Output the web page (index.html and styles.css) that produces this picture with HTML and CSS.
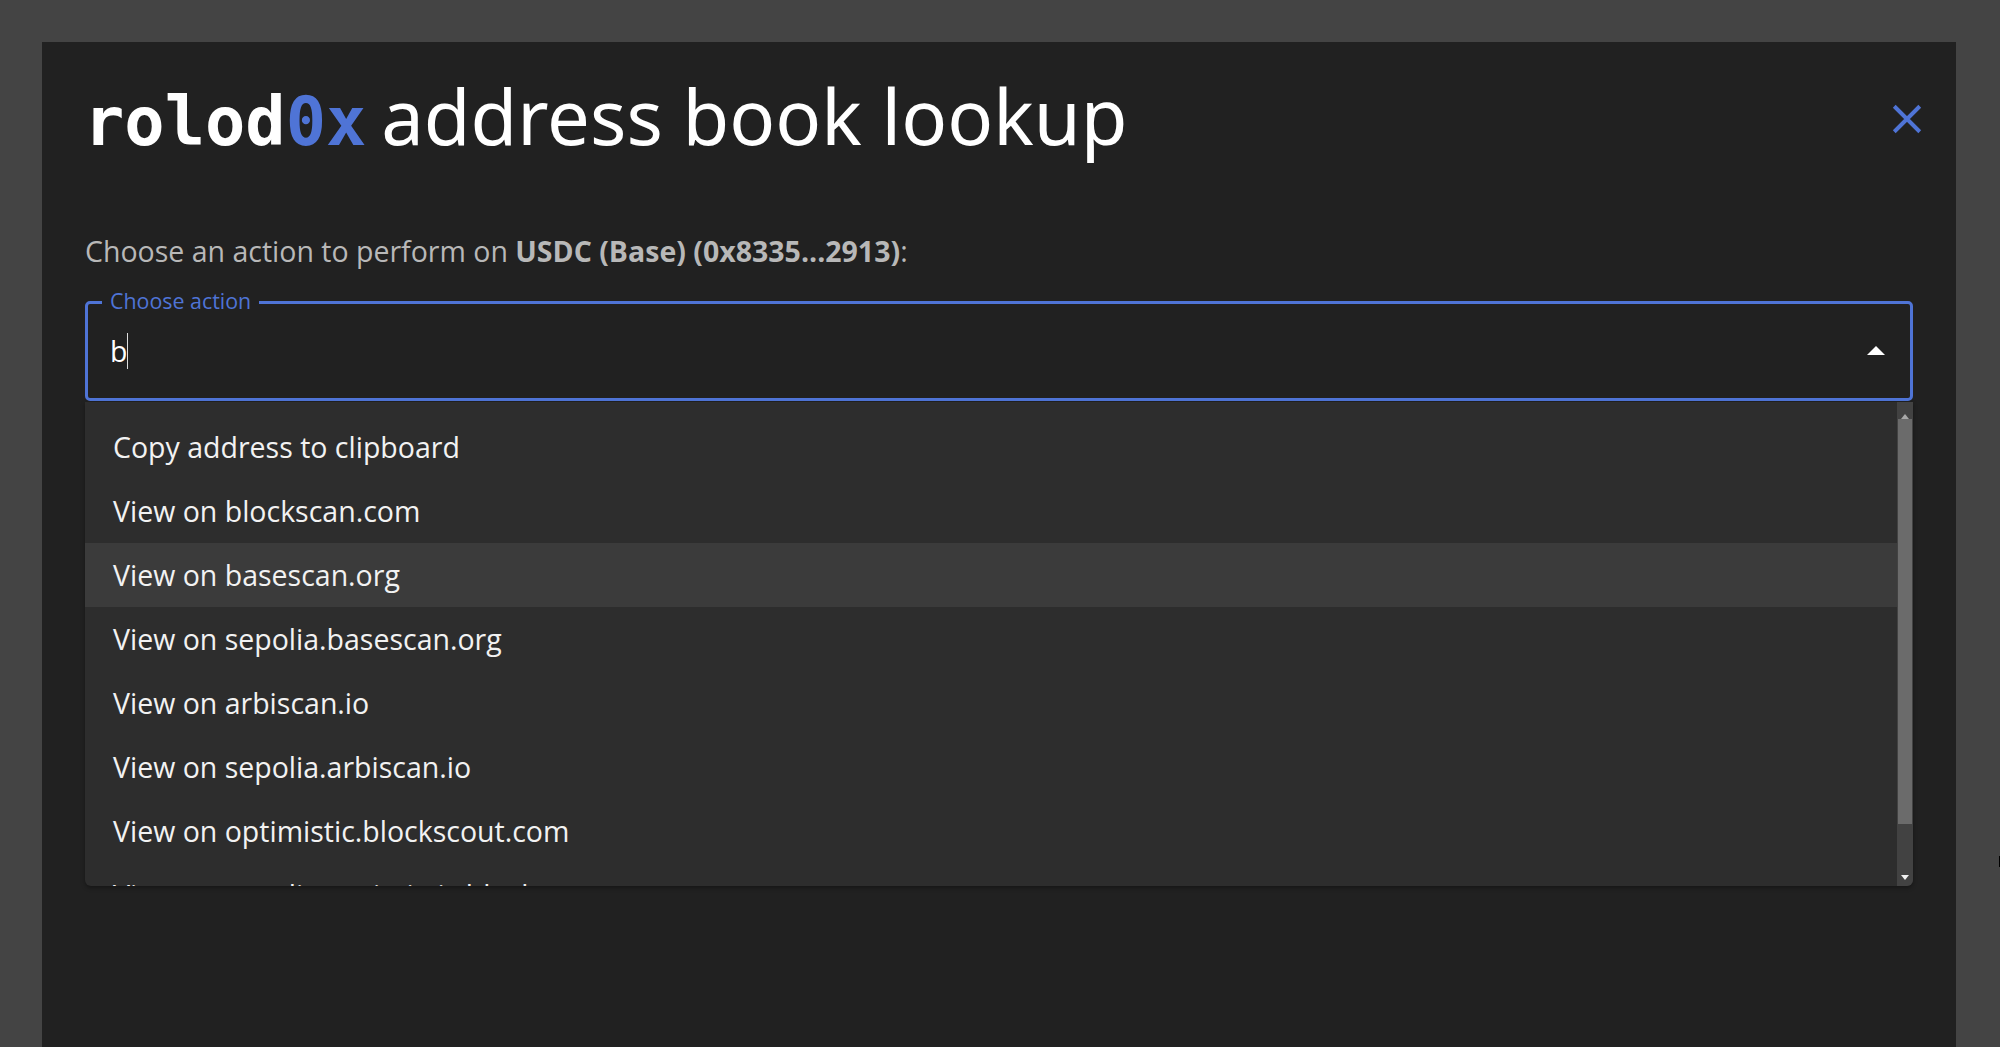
FILE: index.html
```html
<!DOCTYPE html>
<html lang="en">
<head>
<meta charset="utf-8">
<title>rolod0x address book lookup</title>
<link rel="stylesheet" href="styles.css">
</head>
<body>
<main class="modal">
  <header class="head">
    <h1 class="title"><span class="brand">rolod<span class="accent">0x</span></span> address book lookup</h1>
    <button class="close" aria-label="Close">
      <svg viewBox="0 0 24 24" width="36" height="36"><path d="M3.5 3.5 20.5 20.5M20.5 3.5 3.5 20.5" fill="none" stroke="#4f74d6" stroke-width="2.6"/></svg>
    </button>
  </header>
  <p class="prompt">Choose an action to perform on <b>USDC (Base) (0x8335...2913)</b>:</p>
  <div class="combo">
    <div class="field">
      <span class="label">Choose action</span>
      <span class="value">b</span><span class="caret"></span>
      <svg class="arrow" viewBox="0 0 18 9" width="18" height="9"><path d="M0 9 9 0 18 9Z" fill="#fff"/></svg>
    </div>
    <div class="menu">
      <ul class="list">
        <li>Copy address to clipboard</li>
        <li>View on blockscan.com</li>
        <li class="hover">View on basescan.org</li>
        <li>View on sepolia.basescan.org</li>
        <li>View on arbiscan.io</li>
        <li>View on sepolia.arbiscan.io</li>
        <li>View on optimistic.blockscout.com</li>
        <li>View on sepolia-optimistic.blockscout.com</li>
      </ul>
      <div class="scrollbar">
        <span class="tri up"></span>
        <span class="thumb"></span>
        <span class="tri down"></span>
      </div>
    </div>
  </div>
</main>
<span class="cursor"></span>
</body>
</html>
```

FILE: styles.css
```css
html { overflow: hidden; }
body {
  margin: 0;
  padding: 42px 44px 0 42px;
  box-sizing: border-box;
  height: 1047px;
  overflow: hidden;
  background: #444444;
  font-family: "Open Sans", "Noto Sans", sans-serif;
  color: #fff;
}
.modal {
  height: 1005px;
  background: #212121;
  padding: 0 43px;
  box-sizing: border-box;
}
.head {
  display: flex;
  justify-content: space-between;
  align-items: center;
  height: 154px;
}
.title {
  margin: 0 0 0 -1px;
  font-family: "Noto Sans", sans-serif;
  font-weight: 400;
  font-size: 76px;
  line-height: 118px;
  white-space: nowrap;
}
.brand {
  font-family: "DejaVu Sans Mono", monospace;
  font-weight: 700;
  font-size: 67px;
  margin-right: -5px;
}
.accent { color: #4f74d6; }
.close {
  border: 0;
  background: none;
  padding: 0;
  margin-right: -12px;
  display: flex;
}
.prompt {
  margin: 0;
  padding-top: 35px;
  font-size: 28.5px;
  line-height: 40px;
  color: #b8b8b8;
}
.prompt b { font-weight: 700; }
.combo {
  position: relative;
  margin-top: 30px;
}
.field {
  position: relative;
  box-sizing: border-box;
  height: 100px;
  border: 3px solid #4f74d6;
  border-radius: 5px;
  display: flex;
  align-items: center;
  padding-left: 22px;
  font-size: 28.5px;
}
.label {
  position: absolute;
  left: 14px;
  top: -16px;
  padding: 0 8px;
  background: #212121;
  color: #4f74d6;
  font-size: 21.4px;
  line-height: 26px;
}
.caret {
  width: 1px;
  height: 36px;
  margin-left: 0;
  background: #ddd;
}
.arrow {
  position: absolute;
  right: 25px;
  top: 42px;
}
.menu {
  position: absolute;
  left: 0;
  right: 0;
  top: 101px;
  height: 484px;
  display: flex;
  overflow: hidden;
  background: #2d2d2d;
  border-radius: 0 0 6px 6px;
  box-shadow: 0 2px 4px rgba(0,0,0,.35);
}
.list {
  flex: 1;
  margin: 0;
  padding: 13px 0 0;
  list-style: none;
  font-size: 28.5px;
}
.list li {
  height: 64px;
  line-height: 64px;
  padding-left: 28px;
  color: #f2f2f2;
  white-space: nowrap;
}
.list .hover { background: #3b3b3b; }
.scrollbar {
  flex: 0 0 16px;
  display: flex;
  flex-direction: column;
  align-items: center;
  background: #424242;
}
.thumb {
  width: 14px;
  height: 405px;
  background: #6b6b6b;
}
.tri {
  width: 0;
  height: 0;
  border-left: 4.5px solid transparent;
  border-right: 4.5px solid transparent;
  box-sizing: border-box;
}
.tri.up {
  flex: 0 0 17px;
  height: 17px;
  border-bottom: 5px solid #a8a8a8;
  border-top: 6px solid transparent;
}
.tri.down {
  flex: 0 0 11px;
  margin-top: auto;
  height: 11px;
  border-top: 5px solid #f0f0f0;
}
.cursor {
  position: absolute;
  right: 0;
  top: 856px;
  width: 1px;
  height: 11px;
  background: #000;
}
```
